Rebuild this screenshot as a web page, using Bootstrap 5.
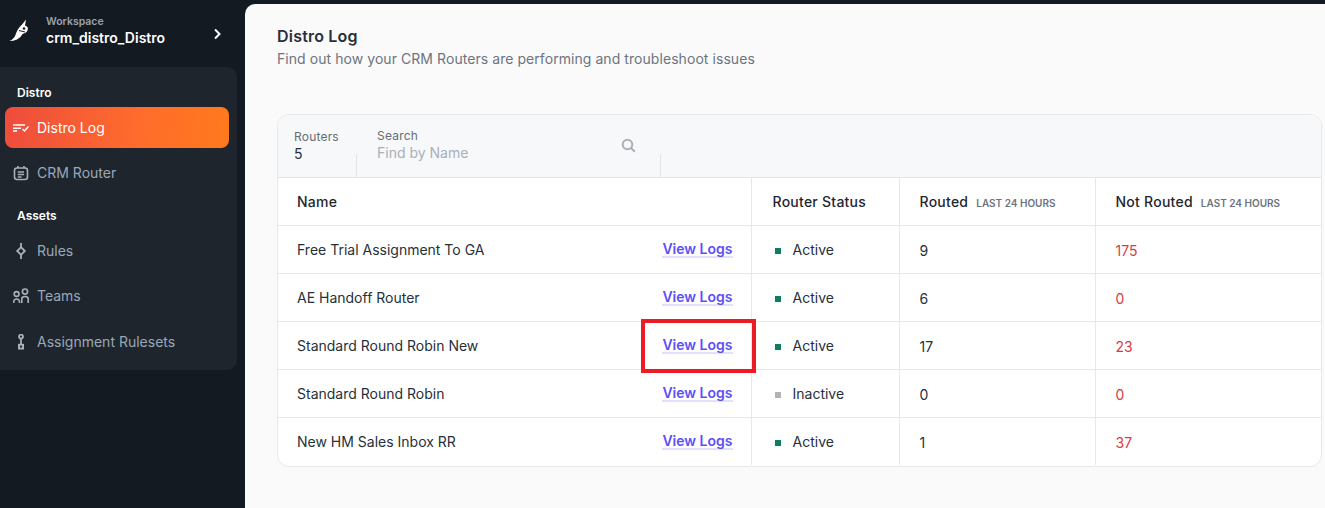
<!DOCTYPE html>
<html lang="en">
<head>
  <meta charset="UTF-8">
  <title>Distro Log</title>
  <link rel="stylesheet" href="https://cdn.jsdelivr.net/npm/bootstrap@5.3.0/dist/css/bootstrap.min.css">
  <style>
    html, body { height: 508px; overflow: hidden; }
    body { background: #131a22; font-family: Inter, "Liberation Sans", sans-serif; font-size: 14px; color: #1f2630; }
    #app { height: 508px; }

    /* sidebar */
    #side { width: 245px; flex: none; }
    #wsHead { height: 67px; padding: 0 23px 0 9px; }
    #wsHead .ws-logo { position: relative; top: -4px; }
    #wsHead .ws-text { position: relative; top: -2px; margin-left: 17px; }
    #wsHead .ws-label { font-size: 10.5px; line-height: 13px; font-weight: 600; color: #9aa3ae; }
    #wsHead .ws-name { font-size: 14px; line-height: 20px; font-weight: 600; color: #fff; }
    #sideBox { width: 237px; height: 303px; background: #1e252d; border-radius: 0 10px 10px 0; padding-top: 18px; }
    .side-title { font-size: 12px; line-height: 16px; font-weight: 600; color: #fff; padding-left: 17px; }
    .side-item { height: 41px; margin: 0 8px 0 5px; padding-left: 8px; gap: 8px; font-size: 14px; color: #9aa8b8; border-radius: 8px; text-decoration: none; }
    .side-item svg { width: 16px; height: 16px; flex: none; }
    .side-item.on { background: linear-gradient(95deg, #ee4c3d 0%, #ff6c2c 60%, #ff7a1c 100%); color: #fff; margin-top: 6px; }
    .mt-item { margin-top: 4px; }
    .mt-last { margin-top: 5px; }
    .side-title.second { margin-top: 15px; margin-bottom: 6px; }

    /* main */
    #main { background: #fafafa; border-radius: 10px 0 0 0; margin-top: 4px; padding: 22px 3px 0 32px; min-width: 0; }
    #main h1 { font-size: 16px; line-height: 20px; font-weight: 600; letter-spacing: .2px; color: #27303a; margin: 0; }
    #main .sub { font-size: 14px; line-height: 20px; letter-spacing: .06px; color: #6c7480; margin: 3px 0 0; }

    #logCard { margin-top: 45px; height: 353px; background: #fff; border: 1px solid #e6e8ea; border-radius: 12px; overflow: hidden; }
    #filters { height: 63px; background: #f7f8fa; border-bottom: 1px solid #e3e5e8; }
    .flt-count { width: 79px; padding: 14px 0 0 16px; position: relative; }
    .flt-search { width: 304px; padding: 13px 0 0 20px; position: relative; }
    .flt-count::after, .flt-search::after { content: ""; position: absolute; right: 0; top: 39px; bottom: 0; border-right: 1px solid #e3e5e8; }
    .flt-label { font-size: 12px; line-height: 15px; letter-spacing: .2px; color: #656d78; }
    .flt-value { font-size: 14px; line-height: 19px; color: #27303a; }
    .flt-search .flt-hint { font-size: 14px; line-height: 19px; color: #a9b0b8; }
    .flt-search svg { position: absolute; right: 25px; top: 23px; width: 15px; height: 15px; }

    #logTable { table-layout: fixed; margin: 0; font-size: 14px; color: #27303a; }
    #logTable th, #logTable td { height: 48px; padding: 0 20px; vertical-align: middle; border-bottom: 1px solid #e6e8ea; border-right: 1px solid #e6e8ea; box-shadow: none; background: none; }
    #logTable th:nth-child(2), #logTable td:nth-child(2) { padding-left: 21px; }
    #logTable td { padding-top: 1px; }
    #logTable td.num { padding-top: 2px; }
    #logTable th { height: 47px; font-weight: 500; letter-spacing: .25px; color: #1f2630; white-space: nowrap; }
    #logTable th:last-child, #logTable td:last-child { border-right: 0; }
    #logTable tr:last-child td { border-bottom: 0; }
    #logTable td:first-child, #logTable th:first-child { padding-left: 19px; padding-right: 18px; }
    .th-note { font-size: 10px; font-weight: 600; letter-spacing: 0; color: #6c7480; margin-left: 8px; }
    .log-link { font-weight: 600; color: #5b4ff5; text-decoration: none; border-bottom: 2px solid #e3e0fd; line-height: 15px; display: inline-block; position: relative; }
    .pick-box::after { content: ""; position: absolute; left: -21px; right: -23px; top: -18px; bottom: -21px; border: 4px solid #ed1c24; }
    .dot { width: 6px; height: 6px; display: inline-block; margin: 0 12px 0 2px; position: relative; top: -1px; }
    .dot-on { background: #0a7f63; }
    .dot-off { background: #b0b3b8; }
    .miss { color: #e0393e; }
  </style>
</head>
<body>
<div id="app" class="d-flex">
  <!-- Sidebar -->
  <div id="side">
    <div id="wsHead" class="d-flex align-items-center">
      <svg width="20" height="24" viewBox="0 0 20 24" class="ws-logo flex-shrink-0">
        <path d="M0.5 23 C4 21.5 6 19 7 15.5 C8 12 10.5 9 13.5 6 L17 1.5 L16 7.5 C18.5 8 19.5 10 18.5 12.5 C17.5 15 15 15.5 13.5 16 C12 18.5 10.5 20 8 21.5 C5.5 22.5 3 23 0.5 23 Z" fill="#fff"/>
        <path d="M10 12.5 L16 14" stroke="#131a22" stroke-width="1"/>
        <circle cx="15" cy="10.5" r="1.3" fill="#131a22"/>
      </svg>
      <div class="ws-text flex-grow-1">
        <div class="ws-label">Workspace</div>
        <div class="ws-name">crm_distro_Distro</div>
      </div>
      <svg width="10" height="12" viewBox="0 0 10 12"><path d="M3 1.5 L7.5 6 L3 10.5" fill="none" stroke="#fff" stroke-width="2"/></svg>
    </div>
    <div id="sideBox">
      <div class="side-title">Distro</div>
      <a class="side-item on d-flex align-items-center" href="#">
        <svg viewBox="0 0 16 16" fill="none" stroke="#fff" stroke-width="1.5"><path d="M0 5H12M0 8.2H8M0 11H4"/><path d="M9.5 9L11.5 11L15.5 6.5"/></svg>
        Distro Log
      </a>
      <a class="side-item d-flex align-items-center mt-item" href="#">
        <svg viewBox="0 0 16 16" fill="none" stroke="#a9b0b8" stroke-width="1.6"><rect x="1.5" y="3" width="13" height="11.5" rx="2.5"/><path d="M5 1V3M11 1V3M4.8 7H11M4.8 9.5H11M4.8 12H8.5"/></svg>
        CRM Router
      </a>
      <div class="side-title second">Assets</div>
      <a class="side-item d-flex align-items-center" href="#">
        <svg viewBox="0 0 16 16" fill="none" stroke="#a9b0b8" stroke-width="1.8"><path d="M8 4.2L11.8 8L8 11.8L4.2 8Z"/><path d="M8 0V4M8 12V16"/></svg>
        Rules
      </a>
      <a class="side-item d-flex align-items-center mt-item" href="#">
        <svg viewBox="0 0 16 16" fill="none" stroke="#a9b0b8" stroke-width="1.6"><circle cx="3.6" cy="6" r="2.4"/><circle cx="12" cy="3.6" r="2.6"/><path d="M0.6 15C0.6 12.5 1.5 11 3.6 11C5.6 11 6.6 12.5 6.6 15"/><path d="M8.8 15V11C8.8 9.5 10 8.5 12 8.5C14 8.5 15.2 9.5 15.2 11V15"/></svg>
        Teams
      </a>
      <a class="side-item d-flex align-items-center mt-last" href="#">
        <svg viewBox="0 0 16 16" fill="none" stroke="#a9b0b8" stroke-width="1.8"><circle cx="8" cy="2.6" r="2"/><path d="M8 4.6V10"/><rect x="5" y="9.8" width="6" height="5.7" fill="#a9b0b8" stroke="none"/><rect x="7" y="11.6" width="2" height="2" fill="#1e252d" stroke="none"/></svg>
        Assignment Rulesets
      </a>
    </div>
  </div>

  <!-- Main -->
  <div id="main" class="flex-grow-1">
    <h1>Distro Log</h1>
    <p class="sub">Find out how your CRM Routers are performing and troubleshoot issues</p>

    <div id="logCard">
      <div id="filters" class="d-flex">
        <div class="flt-count">
          <div class="flt-label">Routers</div>
          <div class="flt-value">5</div>
        </div>
        <div class="flt-search">
          <div class="flt-label">Search</div>
          <div class="flt-hint">Find by Name</div>
          <svg viewBox="0 0 15 15" fill="none" stroke="#a9b0b8" stroke-width="2"><circle cx="6.5" cy="6.5" r="4.8"/><path d="M10 10L13.8 13.8"/></svg>
        </div>
      </div>
      <table id="logTable" class="table">
        <colgroup>
          <col style="width:473px"><col style="width:148px"><col style="width:196px"><col>
        </colgroup>
        <thead>
          <tr><th>Name</th><th>Router Status</th><th>Routed<span class="th-note">LAST 24 HOURS</span></th><th>Not Routed<span class="th-note">LAST 24 HOURS</span></th></tr>
        </thead>
        <tbody>
          <tr>
            <td><div class="d-flex justify-content-between align-items-center">Free Trial Assignment To GA <a class="log-link" href="#">View Logs</a></div></td>
            <td><span class="dot dot-on"></span>Active</td><td class="num">9</td><td class="num miss">175</td>
          </tr>
          <tr>
            <td><div class="d-flex justify-content-between align-items-center">AE Handoff Router <a class="log-link" href="#">View Logs</a></div></td>
            <td><span class="dot dot-on"></span>Active</td><td class="num">6</td><td class="num miss">0</td>
          </tr>
          <tr>
            <td><div class="d-flex justify-content-between align-items-center">Standard Round Robin New <a class="log-link pick-box" href="#">View Logs</a></div></td>
            <td><span class="dot dot-on"></span>Active</td><td class="num">17</td><td class="num miss">23</td>
          </tr>
          <tr>
            <td><div class="d-flex justify-content-between align-items-center">Standard Round Robin <a class="log-link" href="#">View Logs</a></div></td>
            <td><span class="dot dot-off"></span>Inactive</td><td class="num">0</td><td class="num miss">0</td>
          </tr>
          <tr>
            <td><div class="d-flex justify-content-between align-items-center">New HM Sales Inbox RR <a class="log-link" href="#">View Logs</a></div></td>
            <td><span class="dot dot-on"></span>Active</td><td class="num">1</td><td class="num miss">37</td>
          </tr>
        </tbody>
      </table>
    </div>
  </div>
</div>
<script src="https://cdn.jsdelivr.net/npm/bootstrap@5.3.0/dist/js/bootstrap.bundle.min.js"></script>
</body>
</html>
